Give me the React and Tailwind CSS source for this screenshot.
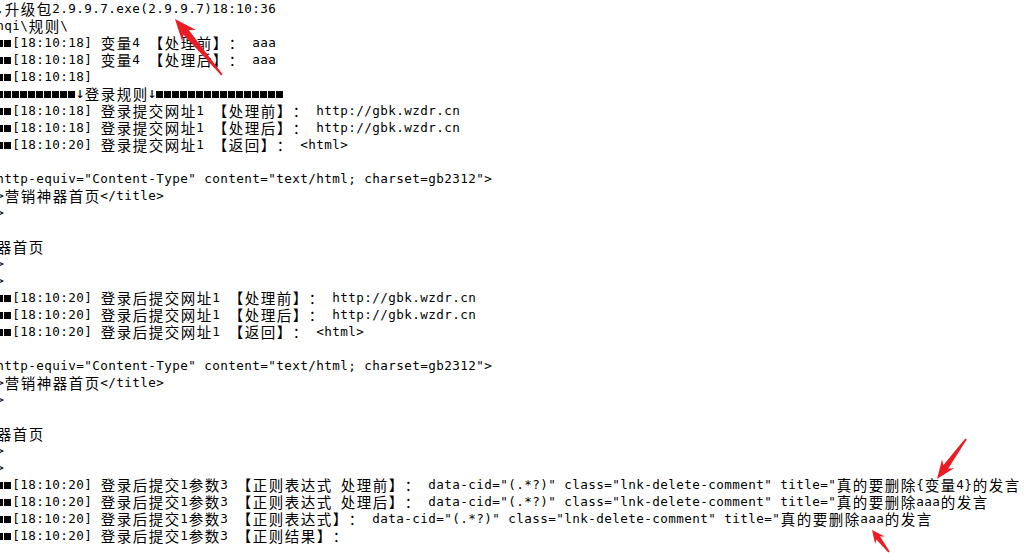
import React from "react";

const LINES = [
  ".升级包2.9.9.7.exe(2.9.9.7)18:10:36",
  "nqi\\规则\\",
  "■■[18:10:18] 变量4 【处理前】： aaa",
  "■■[18:10:18] 变量4 【处理后】： aaa",
  "■■[18:10:18]",
  "■■■■■■■■■■↓登录规则↓■■■■■■■■■■■■■■■■",
  "■■[18:10:18] 登录提交网址1 【处理前】： http://gbk.wzdr.cn",
  "■■[18:10:18] 登录提交网址1 【处理后】： http://gbk.wzdr.cn",
  "■■[18:10:20] 登录提交网址1 【返回】： <html>",
  "",
  'http-equiv="Content-Type" content="text/html; charset=gb2312">',
  ">营销神器首页</title>",
  ">",
  "",
  "器首页",
  ">",
  ">",
  "■■[18:10:20] 登录后提交网址1 【处理前】： http://gbk.wzdr.cn",
  "■■[18:10:20] 登录后提交网址1 【处理后】： http://gbk.wzdr.cn",
  "■■[18:10:20] 登录后提交网址1 【返回】： <html>",
  "",
  'http-equiv="Content-Type" content="text/html; charset=gb2312">',
  ">营销神器首页</title>",
  ">",
  "",
  "器首页",
  ">",
  ">",
  '■■[18:10:20] 登录后提交1参数3 【正则表达式 处理前】： data-cid="(.*?)" class="lnk-delete-comment" title="真的要删除{变量4}的发言',
  '■■[18:10:20] 登录后提交1参数3 【正则表达式 处理后】： data-cid="(.*?)" class="lnk-delete-comment" title="真的要删除aaa的发言',
  '■■[18:10:20] 登录后提交1参数3 【正则表达式】： data-cid="(.*?)" class="lnk-delete-comment" title="真的要删除aaa的发言',
  "■■[18:10:20] 登录后提交1参数3 【正则结果】：",
];

function Cell({ ch }) {
  if (ch === "■") {
    return (
      <span className="flex h-[17px] w-2 shrink-0 items-center">
        <span className="mt-px h-[7px] w-[7px] bg-black" />
      </span>
    );
  }
  if (ch === "↓") {
    return (
      <span className="flex h-[17px] w-2 shrink-0 items-center justify-center font-['DejaVu_Sans_Mono',monospace] text-[15px] leading-[17px]">
        {ch}
      </span>
    );
  }
  const code = ch.codePointAt(0);
  if (code >= 0x2e80) {
    return (
      <span className="flex h-[17px] w-4 shrink-0 items-center justify-center font-['Noto_Sans_CJK_SC',sans-serif] text-[14.5px] leading-[17px]">
        {ch}
      </span>
    );
  }
  return (
    <span className="flex h-[17px] w-2 shrink-0 items-center justify-center font-['DejaVu_Sans_Mono','Liberation_Mono',monospace] text-[12.6px] leading-[17px]">
      {ch === " " ? "" : ch}
    </span>
  );
}

function Line({ text }) {
  return (
    <div className="flex h-[17px] whitespace-nowrap">
      {Array.from(text).map((ch, i) => (
        <Cell key={i} ch={ch} />
      ))}
    </div>
  );
}

function Arrow({ tip, tail, hl, hw, nw }) {
  const dx = tail[0] - tip[0];
  const dy = tail[1] - tip[1];
  const L = Math.hypot(dx, dy);
  const ux = dx / L;
  const uy = dy / L;
  const nx = -uy;
  const ny = ux;
  const p = (a, b) => `${tip[0] + ux * a + nx * b},${tip[1] + uy * a + ny * b}`;
  const pts = [
    p(0, 0),
    p(hl, hw),
    p(hl * 0.78, nw),
    p(L, 0.9),
    p(L, -0.9),
    p(hl * 0.78, -nw),
    p(hl, -hw),
  ].join(" ");
  return <polygon points={pts} fill="#ec1c24" />;
}

export default function App() {
  return (
    <div className="relative h-[557px] w-[1028px] overflow-hidden bg-white text-black">
      <div className="-ml-1 flex flex-col">
        {LINES.map((t, i) => (
          <Line key={i} text={t} />
        ))}
      </div>
      <svg
        className="pointer-events-none absolute left-0 top-0"
        width="1028"
        height="557"
        viewBox="0 0 1028 557"
      >
        <Arrow tip={[175, 19]} tail={[222, 75]} hl={22} hw={9} nw={3.5} />
        <Arrow tip={[937, 479]} tail={[966, 439]} hl={19} hw={7.5} nw={3} />
        <Arrow tip={[872, 530]} tail={[889, 552]} hl={13} hw={6} nw={2.3} />
      </svg>
    </div>
  );
}
